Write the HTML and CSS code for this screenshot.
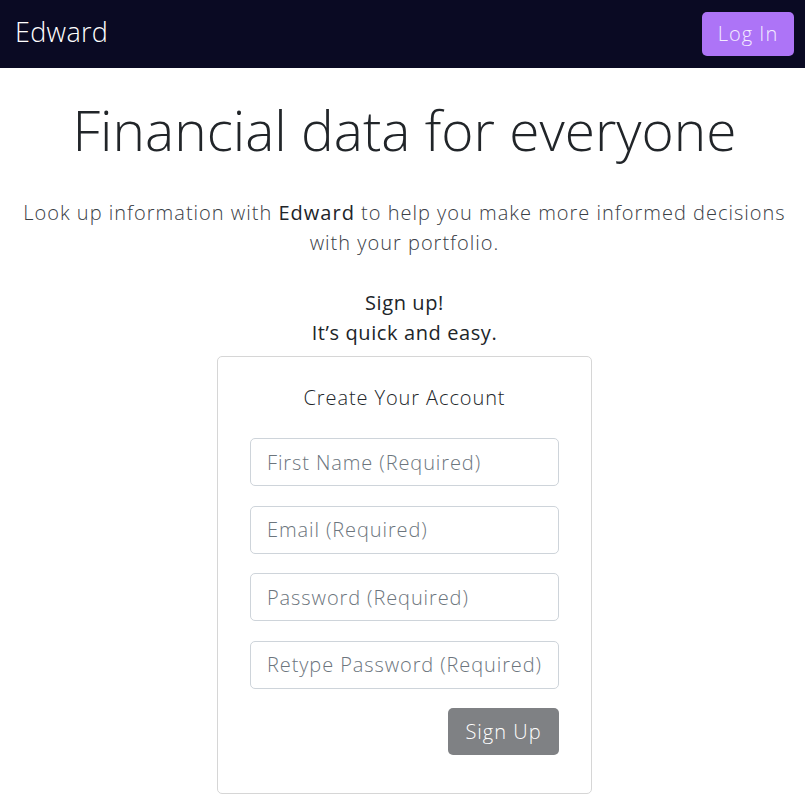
FILE: index.html
```html
<!DOCTYPE html>
<html lang="en">
<head>
<meta charset="utf-8">
<title>Edward</title>
<link rel="stylesheet" href="styles.css">
</head>
<body>
<nav class="navbar">
  <span class="brand">Edward</span>
  <button class="btn btn-login">Log In</button>
</nav>
<main class="main">
  <h1 class="display">Financial data for everyone</h1>
  <p class="lead">Look up information with <strong>Edward</strong> to help you make more informed decisions with your portfolio.</p>
  <p class="cta">Sign up!<br>It’s quick and easy.</p>
  <form class="card">
    <h2 class="card-title">Create Your Account</h2>
    <input class="field" type="text" placeholder="First Name (Required)">
    <input class="field" type="email" placeholder="Email (Required)">
    <input class="field" type="password" placeholder="Password (Required)">
    <input class="field" type="password" placeholder="Retype Password (Required)">
    <div class="actions">
      <button class="btn btn-signup" type="button">Sign Up</button>
    </div>
  </form>
</main>
</body>
</html>
```

FILE: styles.css
```css
* { box-sizing: border-box; }
body {
  margin: 0;
  font-family: "Open Sans", "Liberation Sans", sans-serif;
  color: #212529;
  background: #fff;
}
.navbar {
  height: 68px;
  background: #0a0a23;
  display: flex;
  align-items: center;
  justify-content: space-between;
  padding: 0 11px 0 15px;
}
.brand {
  color: #fff;
  font-size: 27px;
  font-weight: 300;
  line-height: 30px;
  letter-spacing: 0.3px;
  margin-bottom: 4px;
}
.btn {
  font-family: inherit;
  font-size: 20px;
  font-weight: 300;
  line-height: 30px;
  letter-spacing: 1px;
  border: 1px solid transparent;
  border-radius: 5px;
  cursor: pointer;
}
.btn-login {
  background: #ad74f7;
  color: #f4ecff;
  height: 44px;
  width: 92px;
  padding: 0;
}
.main {
  display: flex;
  flex-direction: column;
  align-items: center;
  text-align: center;
  padding-left: 4px;
}
.display {
  font-size: 55px;
  font-weight: 300;
  line-height: 67px;
  margin: 28px 0 0;
  color: #212529;
}
.lead {
  font-size: 20px;
  font-weight: 300;
  line-height: 30px;
  letter-spacing: 1px;
  margin: 35px 0 0;
  padding: 0 10px;
  color: #3a4046;
}
.lead strong { font-weight: 500; color: #212529; }
.cta {
  font-size: 20px;
  font-weight: 400;
  line-height: 30px;
  letter-spacing: 0.6px;
  margin: 30px 0 0;
  color: #212529;
}
.card {
  margin: 8px 0 4px;
  width: 375px;
  border: 1px solid #d6d6d6;
  border-radius: 5px;
  padding: 26px 32px 38px;
  display: flex;
  flex-direction: column;
  gap: 19.5px;
}
.card-title {
  font-size: 20px;
  font-weight: 300;
  line-height: 30px;
  letter-spacing: 0.9px;
  margin: 0 0 5.5px;
  color: #212529;
}
.field {
  height: 48px;
  width: 100%;
  border: 1px solid #ced4da;
  border-radius: 5px;
  padding: 0 12px 0 16px;
  font-family: inherit;
  font-size: 20px;
  font-weight: 300;
  letter-spacing: 0.9px;
  color: #495057;
}
.field::placeholder { color: #6c757d; opacity: 1; }
.actions {
  display: flex;
  justify-content: flex-end;
}
.btn-signup {
  background: #7f8184;
  color: #fff;
  height: 47px;
  width: 111px;
  padding: 0;
}
```
